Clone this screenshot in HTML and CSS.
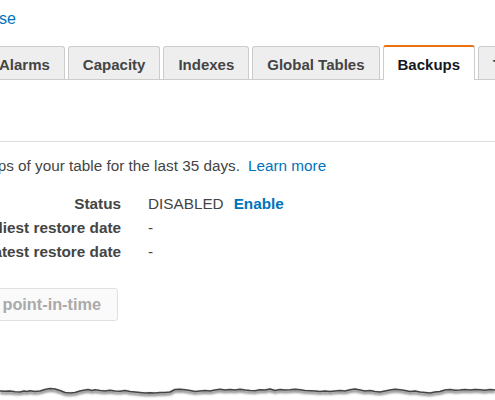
FILE: index.html
```html
<!DOCTYPE html>
<html lang="en">
<head>
<meta charset="utf-8">
<title>Backups</title>
<link rel="stylesheet" href="styles.css">
</head>
<body>
<div class="screen">
  <div class="topbar">
    <div class="clip-right top-clip"><a class="link top-link" href="#">Close</a></div>
  </div>

  <nav class="tabs">
    <div class="tab">Alarms</div>
    <div class="tab">Capacity</div>
    <div class="tab">Indexes</div>
    <div class="tab">Global Tables</div>
    <div class="tab active">Backups</div>
    <div class="tab">Triggers</div>
  </nav>

  <div class="divider"></div>

  <p class="intro">
    <span class="clip-right intro-clip"><span>Point-in-time recovery provides continuous backups of your table for the last 35 days.</span></span>
    <a class="link learn" href="#">Learn more</a>
  </p>

  <div class="details">
    <div class="clip-right label"><span>Status</span></div>
    <div class="value"><span>DISABLED</span><a class="link enable" href="#">Enable</a></div>
    <div class="clip-right label"><span>Earliest restore date</span></div>
    <div class="value">-</div>
    <div class="clip-right label"><span>Latest restore date</span></div>
    <div class="value">-</div>
  </div>

  <div class="actions">
    <div class="clip-right btn-clip"><button class="btn" disabled>Restore to point-in-time</button></div>
  </div>

  <svg class="torn" viewBox="0 0 495 20" width="495" height="20" aria-hidden="true">
    <defs>
      <filter id="soft" x="-5%" y="-100%" width="110%" height="300%">
        <feGaussianBlur stdDeviation="1.3"/>
      </filter>
    </defs>
    <path class="torn-shadow" filter="url(#soft)" transform="translate(0 1.8)" d="M0 11 L5 11.3 L10 11 L15 11.8 L20 12 L24 11 L27 11.5 L30 10.8 L35 11.5 L40 11 L45 9.5 L50 8.5 L55 9 L60 10.5 L65 12.5 L70 13 L75 12.5 L80 11 L85 10 L88 9.5 L92 10.5 L95 9.8 L100 10.5 L105 11 L110 10.2 L115 11 L120 11.3 L125 10.5 L130 11.5 L135 12 L140 12.5 L145 13 L150 12.7 L155 13 L160 12.5 L165 12.5 L170 12 L175 9.5 L180 9.2 L185 9.8 L190 10.5 L195 11.5 L200 11 L205 10.5 L210 11 L215 10 L220 9.3 L225 10 L230 9.5 L235 10 L240 9.2 L245 10 L250 10.5 L255 10.8 L260 9.8 L265 10 L270 9 L275 10.5 L280 9.5 L285 10 L290 9.8 L295 9.2 L300 9.8 L305 10.5 L310 10.8 L315 11 L320 11.5 L325 11 L330 11.5 L335 11 L340 10.5 L345 11 L350 9.8 L355 9 L360 10 L365 11 L370 10.5 L375 11.5 L380 12 L385 11 L390 10 L395 9.2 L400 9.8 L405 10.5 L410 11.5 L415 11 L420 12 L425 12.5 L430 13 L435 12 L440 11.5 L445 10 L450 9.5 L455 10.2 L460 10 L465 9.6 L470 10 L475 9.4 L480 9.8 L485 10.2 L490 9.5 L495 10"/>
    <path class="torn-line" d="M0 11 L5 11.3 L10 11 L15 11.8 L20 12 L24 11 L27 11.5 L30 10.8 L35 11.5 L40 11 L45 9.5 L50 8.5 L55 9 L60 10.5 L65 12.5 L70 13 L75 12.5 L80 11 L85 10 L88 9.5 L92 10.5 L95 9.8 L100 10.5 L105 11 L110 10.2 L115 11 L120 11.3 L125 10.5 L130 11.5 L135 12 L140 12.5 L145 13 L150 12.7 L155 13 L160 12.5 L165 12.5 L170 12 L175 9.5 L180 9.2 L185 9.8 L190 10.5 L195 11.5 L200 11 L205 10.5 L210 11 L215 10 L220 9.3 L225 10 L230 9.5 L235 10 L240 9.2 L245 10 L250 10.5 L255 10.8 L260 9.8 L265 10 L270 9 L275 10.5 L280 9.5 L285 10 L290 9.8 L295 9.2 L300 9.8 L305 10.5 L310 10.8 L315 11 L320 11.5 L325 11 L330 11.5 L335 11 L340 10.5 L345 11 L350 9.8 L355 9 L360 10 L365 11 L370 10.5 L375 11.5 L380 12 L385 11 L390 10 L395 9.2 L400 9.8 L405 10.5 L410 11.5 L415 11 L420 12 L425 12.5 L430 13 L435 12 L440 11.5 L445 10 L450 9.5 L455 10.2 L460 10 L465 9.6 L470 10 L475 9.4 L480 9.8 L485 10.2 L490 9.5 L495 10"/>
  </svg>
</div>
</body>
</html>
```

FILE: styles.css
```css
html, body {
  margin: 0;
  padding: 0;
  overflow: hidden;
  background: #fff;
}

body {
  width: 495px;
  height: 400px;
  font-family: "Liberation Sans", Arial, Helvetica, sans-serif;
  font-size: 15.3px;
  color: #444;
}

.screen {
  width: 495px;
  height: 400px;
  overflow: hidden;
}

.link {
  color: #0073bb;
  text-decoration: none;
}

/* box whose content is right-aligned; anything wider overflows off the left edge */
.clip-right {
  display: flex;
  justify-content: flex-end;
  flex-shrink: 0;
  white-space: nowrap;
}

/* top link */
.topbar {
  display: flex;
  padding-top: 10px;
  height: 18px;
  line-height: 18px;
}

.top-clip {
  width: 16px;
}

.top-link {
  font-size: 16px;
}

/* tabs */
.tabs {
  display: flex;
  align-items: flex-end;
  gap: 3px;
  margin-top: 17px;
  margin-left: -16px;
  height: 34px;
  border-bottom: 1px solid #ccc;
  font-size: 15px;
}

.tab {
  flex-shrink: 0;
  box-sizing: border-box;
  height: 33px;
  padding: 3px 14px 0;
  display: flex;
  align-items: center;
  border: 1px solid #ccc;
  border-bottom: none;
  border-radius: 3px 3px 0 0;
  background: #eee;
  color: #444;
  font-weight: bold;
  white-space: nowrap;
}

.tab.active {
  height: 35px;
  margin-bottom: -1px;
  padding-top: 2px;
  border-top: 2px solid #ec7211;
  background: #fff;
  color: #16191f;
}

/* divider */
.divider {
  height: 1px;
  margin-top: 61px;
  background: #ddd;
}

/* intro */
.intro {
  display: flex;
  margin: 15px 0 0;
  line-height: 18px;
  white-space: nowrap;
}

.intro-clip {
  width: 240px;
}

.learn {
  margin-left: 8px;
}

/* details */
.details {
  display: grid;
  grid-template-columns: 121px auto;
  column-gap: 27px;
  margin-top: 17px;
  line-height: 24px;
}

.label {
  font-weight: bold;
  color: #444;
}

.value {
  white-space: nowrap;
}

.enable {
  margin-left: 10px;
  font-weight: bold;
}

/* action button */
.actions {
  display: flex;
  margin-top: 24px;
}

.btn-clip {
  width: 118px;
}

.btn {
  flex-shrink: 0;
  box-sizing: border-box;
  height: 33px;
  padding: 0 16px;
  border: 1px solid #e0e0e0;
  border-radius: 3px;
  background: #fafafa;
  color: #aaa;
  font-family: "Liberation Sans", Arial, Helvetica, sans-serif;
  font-size: 16.3px;
  font-weight: bold;
  white-space: nowrap;
}

/* torn paper edge */
.torn {
  display: block;
  margin-top: 59px;
}

.torn-shadow {
  fill: none;
  stroke: #666;
  stroke-width: 2.8;
  opacity: 0.75;
}

.torn-line {
  fill: none;
  stroke: #444;
  stroke-width: 1.5;
  stroke-linejoin: round;
}
```
